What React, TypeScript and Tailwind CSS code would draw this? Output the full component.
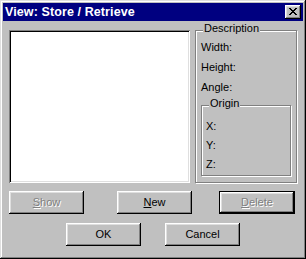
import React from 'react';

const raised =
  'shadow-[inset_-1px_-1px_0_#000,inset_1px_1px_0_#fff,inset_-2px_-2px_0_#808080,inset_2px_2px_0_#dfdfdf]';

function Btn({
  children,
  disabled,
  isDefault,
  className = '',
}: {
  children: React.ReactNode;
  disabled?: boolean;
  isDefault?: boolean;
  className?: string;
}) {
  const text = disabled ? 'text-[#808080] [text-shadow:1px_1px_0_#fff]' : 'text-black';
  if (isDefault) {
    return (
      <div className={`h-[23px] border border-black ${className}`}>
        <div className={`h-full flex items-center justify-center ${raised} ${text}`}>{children}</div>
      </div>
    );
  }
  return (
    <div className={`h-[23px] flex items-center justify-center ${raised} ${text} ${className}`}>
      {children}
    </div>
  );
}

function GroupBox({
  label,
  className = '',
  children,
}: {
  label: string;
  className?: string;
  children: React.ReactNode;
}) {
  return (
    <div
      className={`relative border border-[#808080] shadow-[inset_1px_1px_0_#fff,1px_1px_0_#fff] ${className}`}
    >
      <span className="absolute left-[7px] top-[-9px] px-[1px] bg-[#c0c0c0] leading-[13px]">{label}</span>
      {children}
    </div>
  );
}

function CloseIcon() {
  return (
    <svg width="8" height="7" viewBox="0 0 8 7" shapeRendering="crispEdges">
      <path
        fill="#000"
        d="M0 0h2v1H0zM6 0h2v1H6zM1 1h2v1H1zM5 1h2v1H5zM2 2h4v1H2zM3 3h2v1H3zM2 4h4v1H2zM1 5h2v1H1zM5 5h2v1H5zM0 6h2v1H0zM6 6h2v1H6z"
      />
    </svg>
  );
}

export default function App() {
  return (
    <div
      className="w-[306px] h-[259px] bg-[#c0c0c0] p-[3px] shadow-[inset_-1px_-1px_0_#000,inset_1px_1px_0_#dfdfdf,inset_-2px_-2px_0_#808080,inset_2px_2px_0_#fff] font-['Liberation_Sans',Arial,sans-serif] text-[11px] text-black select-none"
    >
      {/* Title bar */}
      <div className="h-[18px] bg-[#000080] flex items-center justify-between pl-[2px] pr-[2px]">
        <span className="text-white font-bold text-[12.5px] tracking-[0.1px] leading-[18px]">View: Store / Retrieve</span>
        <div className={`w-[16px] h-[14px] bg-[#c0c0c0] flex items-center justify-center pb-[1px] ${raised}`}>
          <CloseIcon />
        </div>
      </div>

      <div className="pl-[6px] pt-[9px]">
        <div className="flex">
          {/* List box */}
          <div className="w-[181px] h-[153px] bg-white shadow-[inset_1px_1px_0_#808080,inset_-1px_-1px_0_#fff,inset_2px_2px_0_#000,inset_-2px_-2px_0_#dfdfdf]" />

          <GroupBox label="Description" className="ml-[5px] w-[102px] h-[153px] pt-[6px] pl-[5px]">
            <div className="leading-[20px]">Width:</div>
            <div className="leading-[20px]">Height:</div>
            <div className="leading-[20px]">Angle:</div>
            <GroupBox label="Origin" className="mt-[8px] w-[90px] h-[71px] pt-[11px] pl-[4px]">
              <div className="leading-[19px]">X:</div>
              <div className="leading-[19px]">Y:</div>
              <div className="leading-[19px]">Z:</div>
            </GroupBox>
          </GroupBox>
        </div>

        <div className="flex mt-[8px]">
          <Btn disabled className="w-[75px]">
            <span className="underline">S</span>how
          </Btn>
          <Btn className="w-[75px] ml-[33px]">
            <span className="underline">N</span>ew
          </Btn>
          <Btn disabled isDefault className="w-[76px] ml-[27px]">
            <span className="underline">D</span>elete
          </Btn>
        </div>

        <div className="flex mt-[9px]">
          <Btn className="w-[75px] ml-[57px]">OK</Btn>
          <Btn className="w-[75px] ml-[24px]">Cancel</Btn>
        </div>
      </div>
    </div>
  );
}
